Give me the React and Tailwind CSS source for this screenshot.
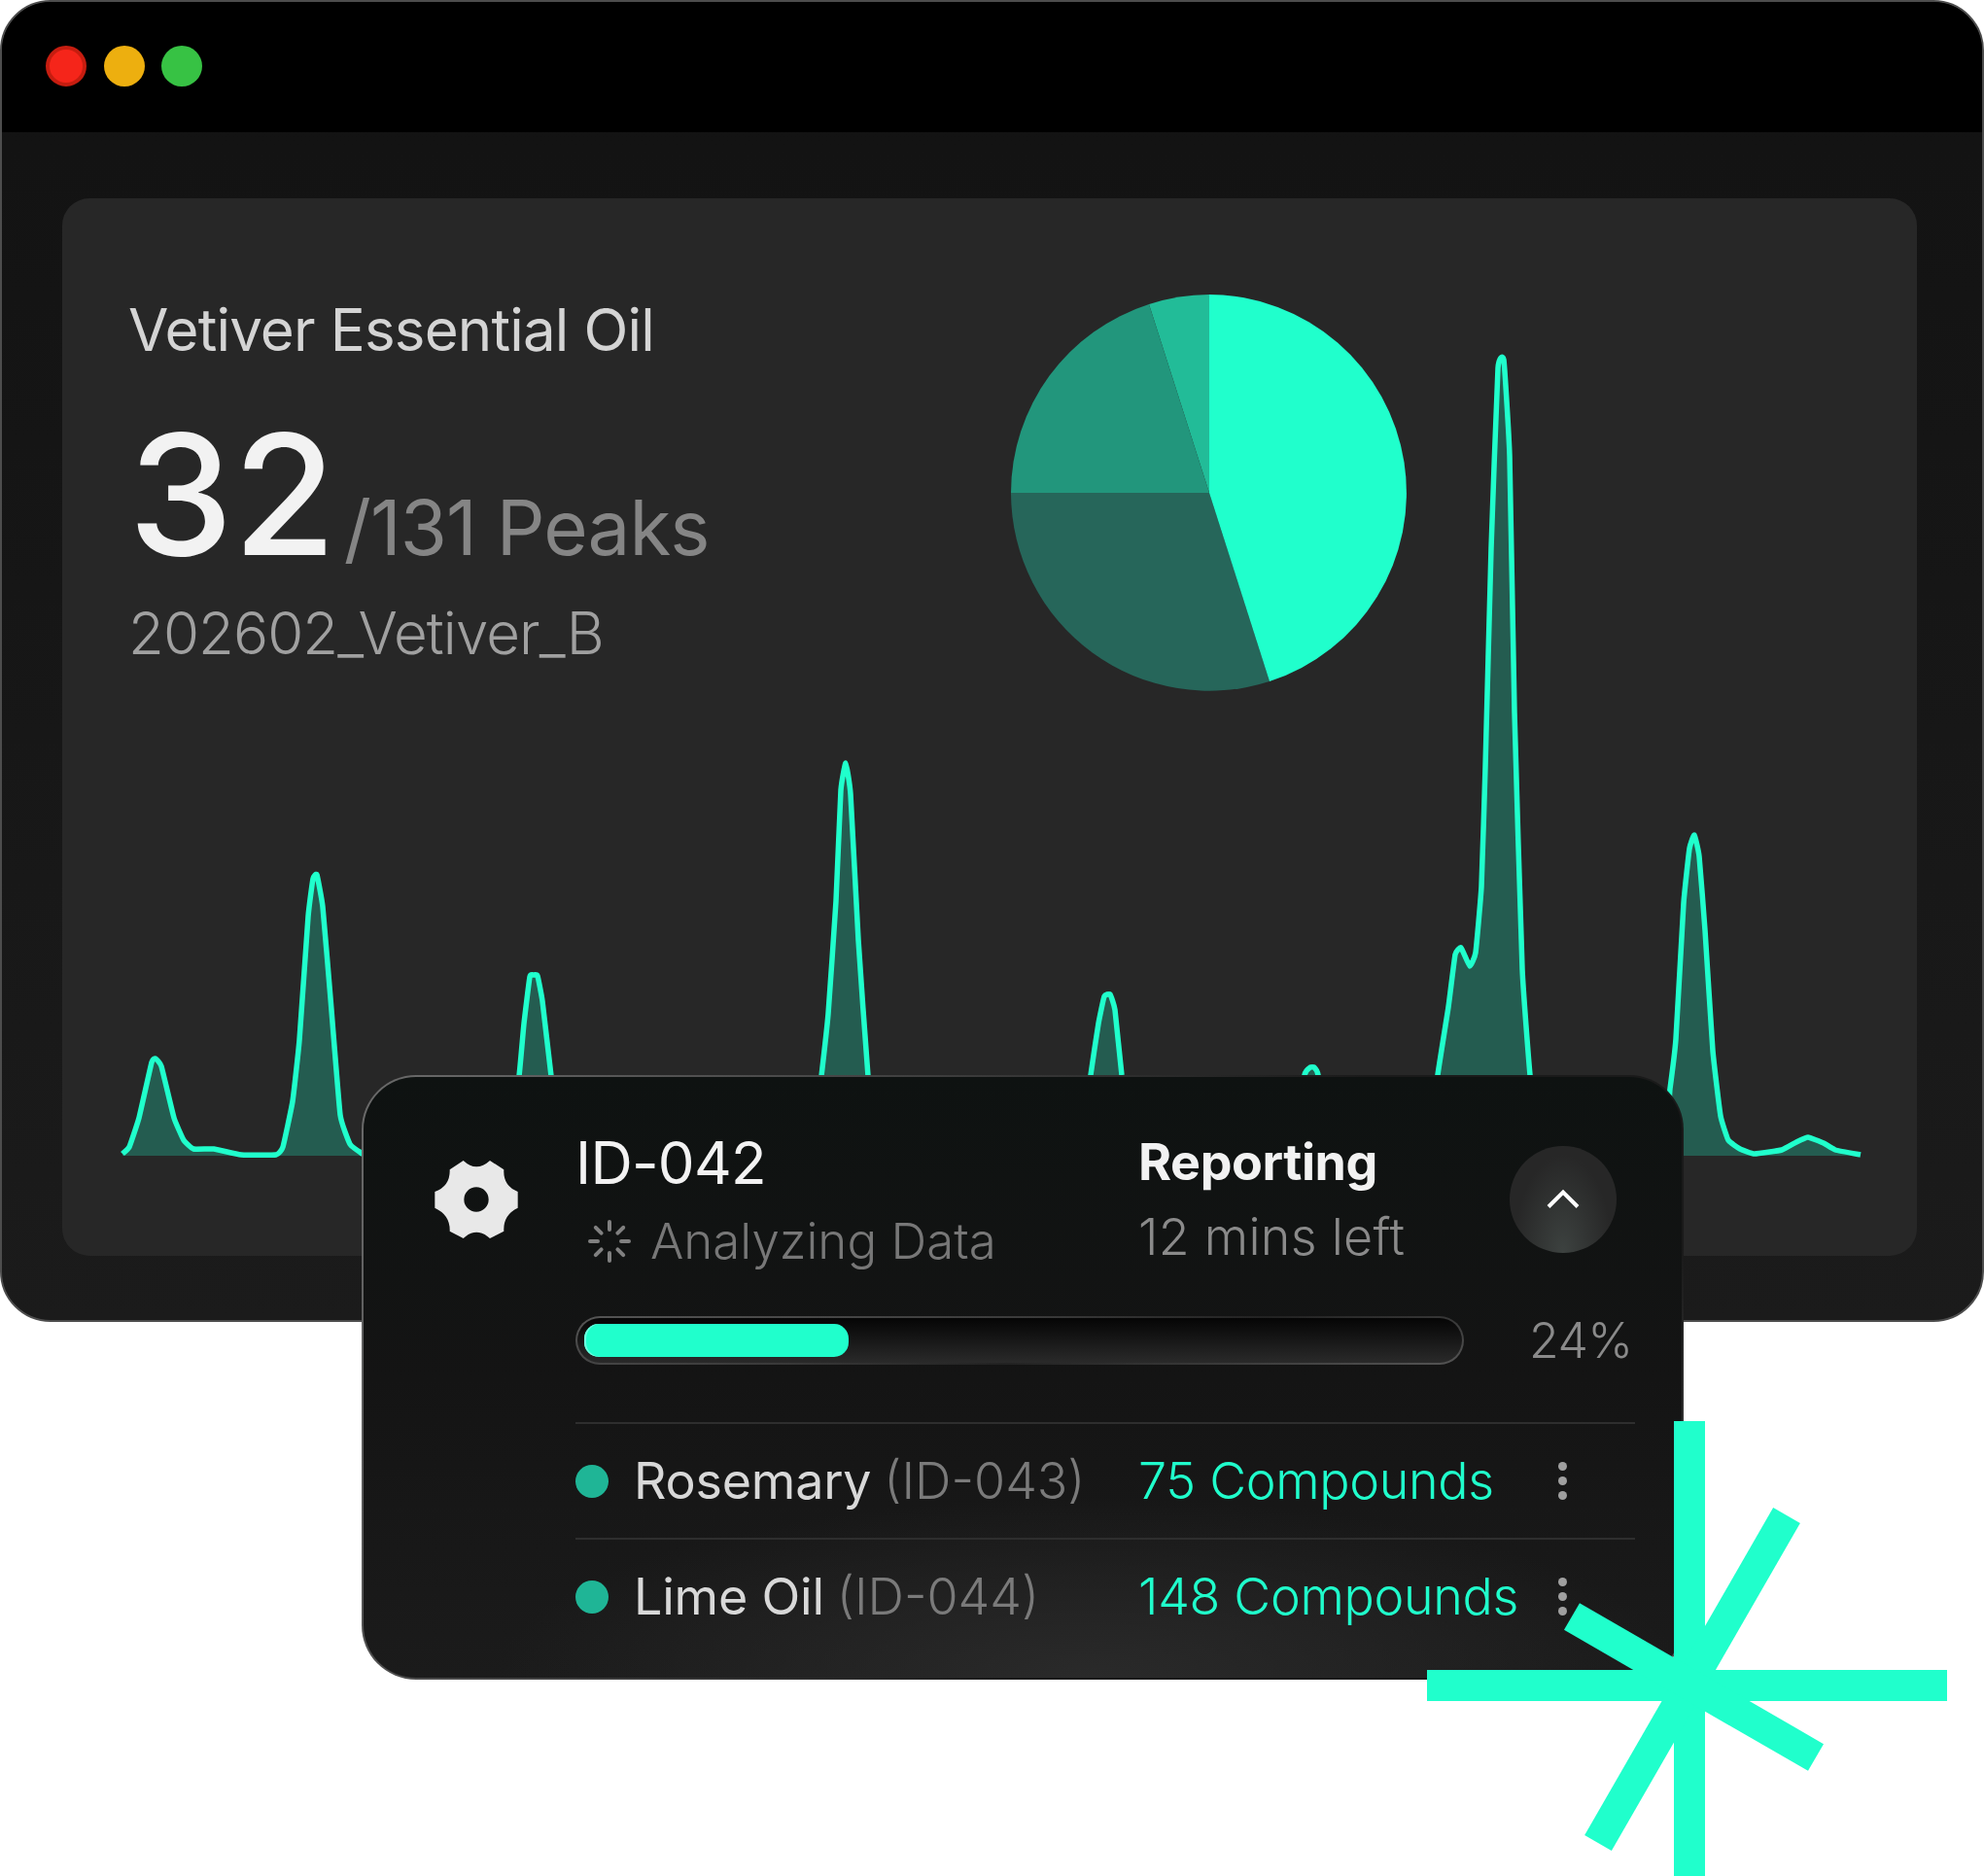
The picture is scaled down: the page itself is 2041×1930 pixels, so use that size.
import { ChevronUp, Loader } from 'lucide-react';

const chartLine = [
  [126, 1187], [133, 1180], [143, 1150], [156, 1093], [160, 1089], [166, 1097], [179, 1150], [189, 1173], [199, 1182], [220, 1182],
  [248, 1188], [284, 1188], [291, 1180], [301, 1133], [308, 1070], [317, 943], [322, 904], [326, 900], [332, 933], [340, 1027],
  [350, 1147], [360, 1177], [370, 1185], [380, 1188], [522, 1188], [534, 1107], [539, 1053], [545, 1005], [549, 1003], [553, 1004], [558, 1030],
  [567, 1107], [578, 1188], [835, 1188], [845, 1107], [852, 1043], [860, 927], [865, 813], [870, 785], [875, 817], [883, 967],
  [893, 1107], [904, 1188], [1112, 1188], [1122, 1106], [1130, 1053], [1136, 1025], [1142, 1023], [1147, 1039], [1154, 1106], [1166, 1188],
  [1330, 1188], [1342, 1106], [1348, 1098], [1352, 1098], [1356, 1106], [1366, 1188], [1470, 1188], [1479, 1106], [1490, 1036], [1497, 982],
  [1503, 975], [1512, 994], [1518, 980], [1524, 912], [1528, 789], [1534, 564], [1541, 379], [1547, 370], [1553, 469], [1558, 733],
  [1566, 997], [1574, 1106], [1584, 1188], [1708, 1188], [1718, 1120], [1724, 1069], [1732, 929], [1738, 873], [1743, 859], [1748, 881],
  [1754, 957], [1762, 1081], [1770, 1148], [1778, 1173], [1790, 1182], [1805, 1187], [1833, 1183], [1848, 1175], [1860, 1170], [1876, 1176],
  [1888, 1183], [1914, 1188],
];

// soft catmull-rom through the traced points
const smoothPath = (pts) => {
  let d = `M${pts[0][0]} ${pts[0][1]}`;
  for (let i = 0; i < pts.length - 1; i++) {
    const p0 = pts[i - 1] || pts[i];
    const p1 = pts[i];
    const p2 = pts[i + 1];
    const p3 = pts[i + 2] || p2;
    const k = 0.06;
    const c1x = p1[0] + (p2[0] - p0[0]) * k;
    const c1y = p1[1] + (p2[1] - p0[1]) * k;
    const c2x = p2[0] - (p3[0] - p1[0]) * k;
    const c2y = p2[1] - (p3[1] - p1[1]) * k;
    d += `C${c1x} ${c1y} ${c2x} ${c2y} ${p2[0]} ${p2[1]}`;
  }
  return d;
};

const linePath = smoothPath(chartLine);

const Chart = () => (
  <svg viewBox="64 204 1908 1088" className="w-[1908px] h-[1088px] [grid-area:1/1]">
    <path d={`${linePath}L1914 1189L126 1189Z`} fill="#245c50" />
    <path d={linePath} fill="none" stroke="#20ffcc" strokeWidth="5.5" strokeLinejoin="round" />
  </svg>
);

const Pie = () => (
  <svg viewBox="-204 -204 408 408" className="w-[408px] h-[408px] shrink-0 mt-[99px] ml-auto mr-[524px]">
    <path d="M0 0L-62 -194A204 204 0 0 1 0 -204Z" fill="#22bc98" />
    <path d="M0 0L-204 0A204 204 0 0 1 -62 -194Z" fill="#22967c" />
    <path d="M0 0L62 194A204 204 0 0 1 -204 0Z" fill="#26665a" />
    <path d="M0 0L0 -204A204 204 0 0 1 62 194Z" fill="#20ffcc" />
  </svg>
);

const Gear = () => (
  <svg viewBox="52 72 256 240" className="w-[86px] h-[80px] shrink-0 mt-[86px]">
    <path
      fillRule="evenodd"
      fill="#e8e8e8"
      d="M140 72Q180 110 222 72L265 100Q262 150 308 168V218Q262 240 265 290L222 312Q180 275 140 312L98 290Q100 240 52 218V168Q100 150 98 100ZM180 154A38 38 0 1 0 180 230A38 38 0 1 0 180 154Z"
    />
  </svg>
);

const Star = () => (
  <svg viewBox="0 0 2041 1930" className="absolute left-0 top-0 w-[2041px] h-[1930px] pointer-events-none">
    <g stroke="#20ffcc" strokeWidth="32">
      <line x1="1738" y1="1462" x2="1738" y2="1930" />
      <line x1="1468" y1="1734" x2="2003" y2="1734" />
      <line x1="1838" y1="1559" x2="1644" y2="1896" />
      <line x1="1617" y1="1663" x2="1868" y2="1808" />
    </g>
  </svg>
);

const MenuDots = () => (
  <div className="flex flex-col gap-[6px]">
    <span className="w-[9px] h-[9px] rounded-full bg-[#a0a0a0]" />
    <span className="w-[9px] h-[9px] rounded-full bg-[#a0a0a0]" />
    <span className="w-[9px] h-[9px] rounded-full bg-[#a0a0a0]" />
  </div>
);

const SampleRow = ({ name, id, compounds }) => (
  <div className="grid grid-cols-[579px_432px_9px] items-center h-[117px] text-[52px] leading-[64px] font-light">
    <div className="flex items-center">
      <span className="w-[34px] h-[34px] rounded-full bg-[#1fb596] mr-[26px]" />
      <span className="text-[#d8d8d8] font-normal tracking-[-0.004em]">{name}</span>
      <span className="text-[#7a7a7a] ml-[13px]">{id}</span>
    </div>
    <span className="text-[#20ffcc] whitespace-nowrap tracking-[-0.006em]">{compounds}</span>
    <MenuDots />
  </div>
);

const App = () => {
  return (
    <div className="relative w-[2041px] h-[1930px] overflow-hidden bg-white font-['Inter',sans-serif]">
      {/* window */}
      <div className="w-[2041px] h-[1360px] rounded-[52px] border-2 border-[#4d4d4d] bg-[linear-gradient(180deg,#121212,#1b1b1b)] overflow-hidden">
        <div className="h-[134px] bg-black flex items-center gap-[17.5px] pl-[45px] pb-[2px]">
          <span className="w-[42px] h-[42px] rounded-full bg-[#f5251a] border-4 border-[#c61d10]" />
          <span className="w-[42px] h-[42px] rounded-full bg-[#edaf0f]" />
          <span className="w-[42px] h-[42px] rounded-full bg-[#37c244]" />
        </div>
        <div className="pt-[68px] pl-[62px]">
          <div className="grid w-[1908px] h-[1088px] rounded-[28px] bg-[#272727]">
            <Chart />
            <div className="flex [grid-area:1/1]">
              <div className="pt-[100px] pl-[68px]">
                <h1 className="text-[60px] leading-[70px] tracking-[-0.014em] text-[#d4d4d4] font-normal whitespace-nowrap">Vetiver Essential Oil</h1>
                <div className="flex items-baseline mt-[44px]">
                  <span className="text-[172px] leading-[180px] text-[#f2f2f2] font-[450]">32</span>
                  <span className="text-[78px] leading-[80px] text-[#858585] font-normal ml-[8px] tracking-[-0.012em] whitespace-nowrap">/131 Peaks</span>
                </div>
                <p className="text-[60px] leading-[70px] mt-[18px] tracking-[-0.015em] text-[#a0a0a0] font-light whitespace-nowrap">202602_Vetiver_B</p>
              </div>
              <Pie />
            </div>
          </div>
        </div>
      </div>

      {/* status card */}
      <div className="relative -mt-[254px] ml-[372px] w-[1360px] h-[622px] rounded-[56px] border-2 border-transparent pl-[73px] flex [background:radial-gradient(ellipse_45%_30%_at_55%_100%,#2a2a2a,transparent)_padding-box,linear-gradient(180deg,#0e1211,#141414_50%,#1b1b1b)_padding-box,linear-gradient(120deg,#6b6b6b,#444_30%,#1a1a1a_60%,#1a1a1a_85%,#555)_border-box]">
        <Gear />
        <div className="ml-[59px] w-[1090px] pt-[56px]">
          <div className="grid grid-cols-[579px_382px_110px]">
            <div>
              <div className="text-[60px] leading-[64px] tracking-[-0.012em] text-[#f2f2f2]">ID-042</div>
              <div className="flex items-center mt-[17px] pl-[11px] text-[51px] leading-[64px] text-[#777777] font-light">
                <Loader size={48} strokeWidth={2} className="text-[#808080] mr-[18px]" />
                Analyzing Data
              </div>
            </div>
            <div>
              <div className="text-[52px] leading-[64px] tracking-[-0.008em] font-bold text-[#f2f2f2]">Reporting</div>
              <div className="mt-[13px] text-[52px] leading-[64px] tracking-[0.005em] font-light text-[#8a8a8a]">12 mins left</div>
            </div>
            <div className="mt-[15px] w-[110px] h-[110px] rounded-full flex items-center justify-center bg-[radial-gradient(ellipse_at_50%_100%,#3d4240,#272727_65%)]">
              <ChevronUp size={60} strokeWidth={1.6} strokeLinecap="butt" strokeLinejoin="miter" className="text-white" />
            </div>
          </div>
          <div className="flex items-center mt-[45px]">
            <div className="shrink-0 w-[914px] h-[50px] rounded-[25px] border-2 border-transparent flex items-center pl-[7px] [background:linear-gradient(180deg,#050505,#2a2a2a)_padding-box,linear-gradient(170deg,#555,#3a3a3a_40%,#222_60%,#555)_border-box]">
              <div className="w-[272px] h-[34px] rounded-[15px] bg-[#20ffcc] shadow-[inset_2px_0_0_#6fffe0]" />
            </div>
            <span className="ml-[67px] text-[50px] leading-[50px] tracking-[-0.01em] font-light text-[#8a8a8a]">24%</span>
          </div>
          <div className="mt-[59px] h-[2px] bg-[#2e2e2e]" />
          <SampleRow name="Rosemary" id="(ID-043)" compounds="75 Compounds" />
          <div className="h-[2px] bg-[#2e2e2e]" />
          <SampleRow name="Lime Oil" id="(ID-044)" compounds="148 Compounds" />
        </div>
      </div>

      <Star />
    </div>
  );
};

export default App;
